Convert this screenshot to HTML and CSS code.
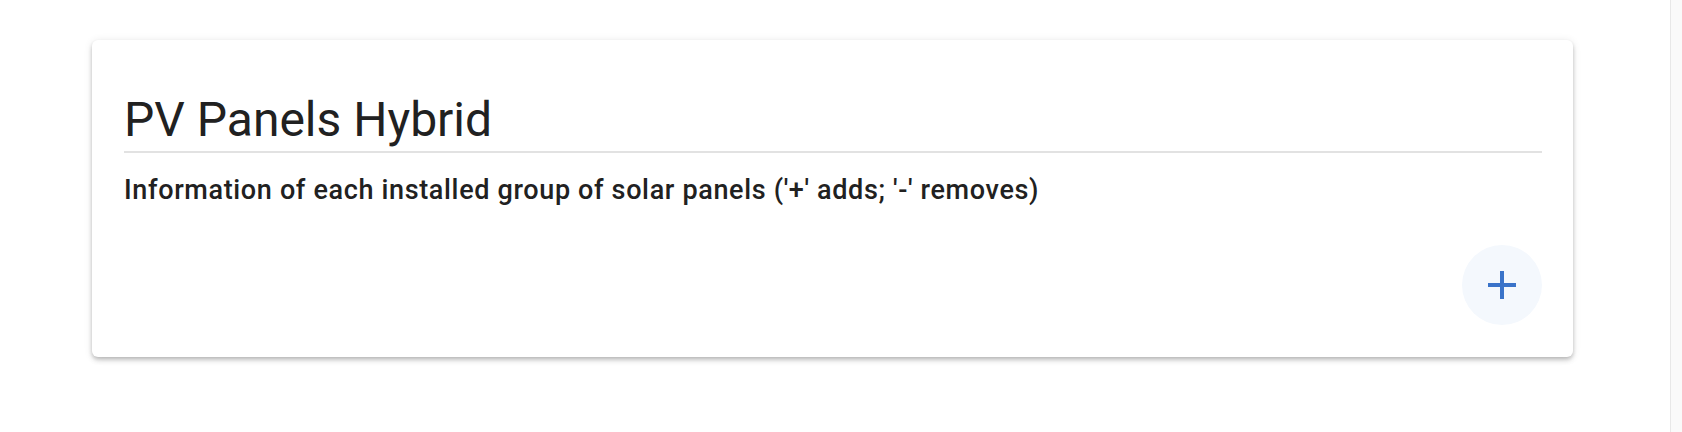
FILE: index.html
```html
<!DOCTYPE html>
<html lang="en">
<head>
    <meta charset="UTF-8">
    <meta name="viewport" content="width=device-width, initial-scale=1.0">
    <title>PV Panels Hybrid</title>
    <link rel="stylesheet" href="styles.css">
</head>
<body>
    <div class="page">
        <main class="content">
            <section class="card">
                <h1 class="cardTitle">PV Panels Hybrid</h1>
                <p class="cardSubtitle">Information of each installed group of solar panels ('+' adds; '-' removes)</p>
                <div class="cardActions">
                    <button class="addButton" aria-label="Add">
                        <svg viewBox="0 0 24 24" width="48" height="48">
                            <path d="M19 13h-6v6h-2v-6H5v-2h6V5h2v6h6v2z" fill="currentColor"/>
                        </svg>
                    </button>
                </div>
            </section>
        </main>
        <div class="scrollTrack"></div>
    </div>
</body>
</html>
```

FILE: styles.css
```css
body {
    background-color: #ffffff;
    color: #212121;
    font-family: Roboto, "Noto Sans", Arial, sans-serif;
    margin: 0;
    padding: 0;
}

.page {
    display: flex;
    min-height: 432px;
}

.content {
    flex: 1;
    padding: 40px 97px 0 92px;
}

.scrollTrack {
    width: 11px;
    background-color: #fafafa;
    border-left: 1px solid #e8e8e8;
}

.card {
    background-color: #ffffff;
    border-radius: 6px;
    padding: 52px 31px 32px 32px;
    box-shadow: 0 2px 4px -1px rgba(0, 0, 0, 0.2), 0 4px 5px 0 rgba(0, 0, 0, 0.1), 0 1px 8px 0 rgba(0, 0, 0, 0.1);
}

.cardTitle {
    font-size: 48px;
    font-weight: 400;
    line-height: 56px;
    margin: 0;
    padding-bottom: 3px;
    border-bottom: 2px solid #e2e2e2;
}

.cardSubtitle {
    font-size: 27px;
    font-weight: 500;
    letter-spacing: 0.65px;
    line-height: 32px;
    margin: 21px 0 0 0;
}

.cardActions {
    display: flex;
    justify-content: flex-end;
    margin-top: 39px;
}

.addButton {
    width: 80px;
    height: 80px;
    border: none;
    border-radius: 50%;
    background-color: #f4f8fd;
    color: #3a73c9;
    display: flex;
    align-items: center;
    justify-content: center;
    padding: 0;
    cursor: pointer;
}
```
